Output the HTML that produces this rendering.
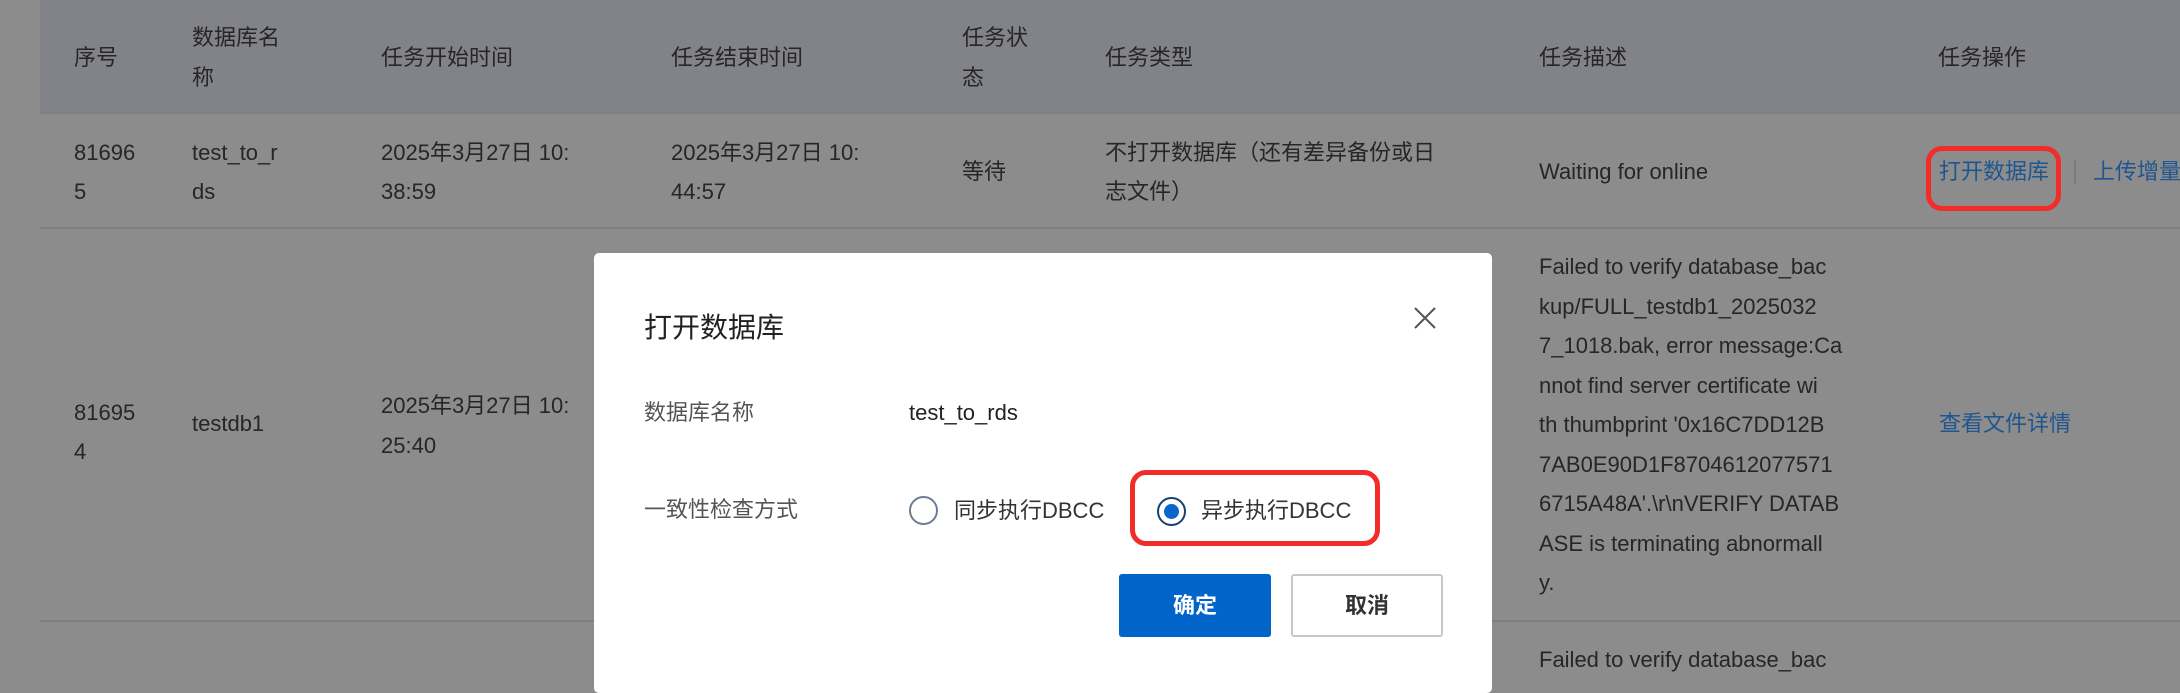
<!DOCTYPE html>
<html><head><meta charset="utf-8"><style>
*{margin:0;padding:0;box-sizing:border-box}
body{width:2180px;height:676px;overflow:hidden;background:#8c8c8c;font-family:"Liberation Sans","Noto Sans CJK SC",sans-serif;font-size:22px;color:#262626;position:relative}
.a{position:absolute;white-space:nowrap;line-height:40px}
.hdr{position:absolute;left:40px;top:0;width:2140px;height:114px;background:#828388;border-bottom:2px solid #7e7f83}
.ln{position:absolute;left:40px;width:2140px;height:2px;background:#7f7f80}
.lk{color:#1f5590}
.modal{position:absolute;left:594px;top:253px;width:898px;height:440px;background:#fff;border-radius:5px}
.rb{position:absolute;border:5px solid #f22c28;border-radius:16px}
</style></head><body>
<div class="hdr"></div>
<div class="a" style="left:74px;top:38px">序号</div>
<div class="a" style="left:192px;top:18px">数据库名</div>
<div class="a" style="left:192px;top:58px">称</div>
<div class="a" style="left:381px;top:38px">任务开始时间</div>
<div class="a" style="left:671px;top:38px">任务结束时间</div>
<div class="a" style="left:962px;top:18px">任务状</div>
<div class="a" style="left:962px;top:58px">态</div>
<div class="a" style="left:1105px;top:38px">任务类型</div>
<div class="a" style="left:1539px;top:38px">任务描述</div>
<div class="a" style="left:1938px;top:38px">任务操作</div>

<div class="a" style="left:74px;top:133px">81696</div>
<div class="a" style="left:74px;top:172px">5</div>
<div class="a" style="left:192px;top:133px">test_to_r</div>
<div class="a" style="left:192px;top:172px">ds</div>
<div class="a" style="left:381px;top:133px">2025年3月27日 10:</div>
<div class="a" style="left:381px;top:172px">38:59</div>
<div class="a" style="left:671px;top:133px">2025年3月27日 10:</div>
<div class="a" style="left:671px;top:172px">44:57</div>
<div class="a" style="left:962px;top:152px">等待</div>
<div class="a" style="left:1105px;top:133px">不打开数据库（还有差异备份或日</div>
<div class="a" style="left:1105px;top:172px">志文件）</div>
<div class="a" style="left:1539px;top:152px">Waiting for online</div>
<div class="a lk" style="left:1939px;top:152px">打开数据库</div>
<div style="position:absolute;left:2074px;top:160px;width:2px;height:24px;background:#7a7a7a"></div>
<div class="a lk" style="left:2093px;top:152px">上传增量</div>
<div class="rb" style="left:1926px;top:146px;width:135px;height:65px"></div>
<div class="ln" style="top:227px"></div>

<div class="a" style="left:74px;top:393px">81695</div>
<div class="a" style="left:74px;top:432px">4</div>
<div class="a" style="left:192px;top:404px">testdb1</div>
<div class="a" style="left:381px;top:386px">2025年3月27日 10:</div>
<div class="a" style="left:381px;top:426px">25:40</div>
<div class="a" style="left:1539px;top:247px;line-height:39.5px">Failed to verify database_bac<br>kup/FULL_testdb1_2025032<br>7_1018.bak, error message:Ca<br>nnot find server certificate wi<br>th thumbprint '0x16C7DD12B<br>7AB0E90D1F8704612077571<br>6715A48A'.\r\nVERIFY DATAB<br>ASE is terminating abnormall<br>y.</div>
<div class="a lk" style="left:1939px;top:404px">查看文件详情</div>
<div class="ln" style="top:620px"></div>
<div class="a" style="left:1539px;top:640px">Failed to verify database_bac</div>

<div class="modal"></div>
<div class="a" style="left:644px;top:308px;font-size:28px;color:#222">打开数据库</div>
<svg style="position:absolute;left:1414px;top:307px" width="22" height="22"><path d="M1 1L21 21M21 1L1 21" stroke="#555" stroke-width="2"/></svg>
<div class="a" style="left:644px;top:393px;color:#555">数据库名称</div>
<div class="a" style="left:909px;top:393px;color:#222">test_to_rds</div>
<div class="a" style="left:644px;top:490px;color:#555">一致性检查方式</div>
<div style="position:absolute;left:909px;top:496px;width:29px;height:29px;border:2px solid #6d7e94;border-radius:50%"></div>
<div class="a" style="left:954px;top:491px;color:#333">同步执行DBCC</div>
<div style="position:absolute;left:1157px;top:497px;width:29px;height:29px;border:2px solid #1b3f6e;border-radius:50%"></div>
<div style="position:absolute;left:1164px;top:504px;width:15px;height:15px;background:#0a66c8;border-radius:50%"></div>
<div class="a" style="left:1201px;top:491px;color:#333">异步执行DBCC</div>
<div class="rb" style="left:1130px;top:470px;width:250px;height:76px"></div>
<div style="position:absolute;left:1119px;top:574px;width:152px;height:63px;background:#0064c8;border-radius:3px;color:#fff;font-weight:bold;text-align:center;line-height:63px">确定</div>
<div style="position:absolute;left:1291px;top:574px;width:152px;height:63px;background:#fff;border:2px solid #c6c8cc;border-radius:3px;color:#333;font-weight:bold;text-align:center;line-height:59px">取消</div>
</body></html>
